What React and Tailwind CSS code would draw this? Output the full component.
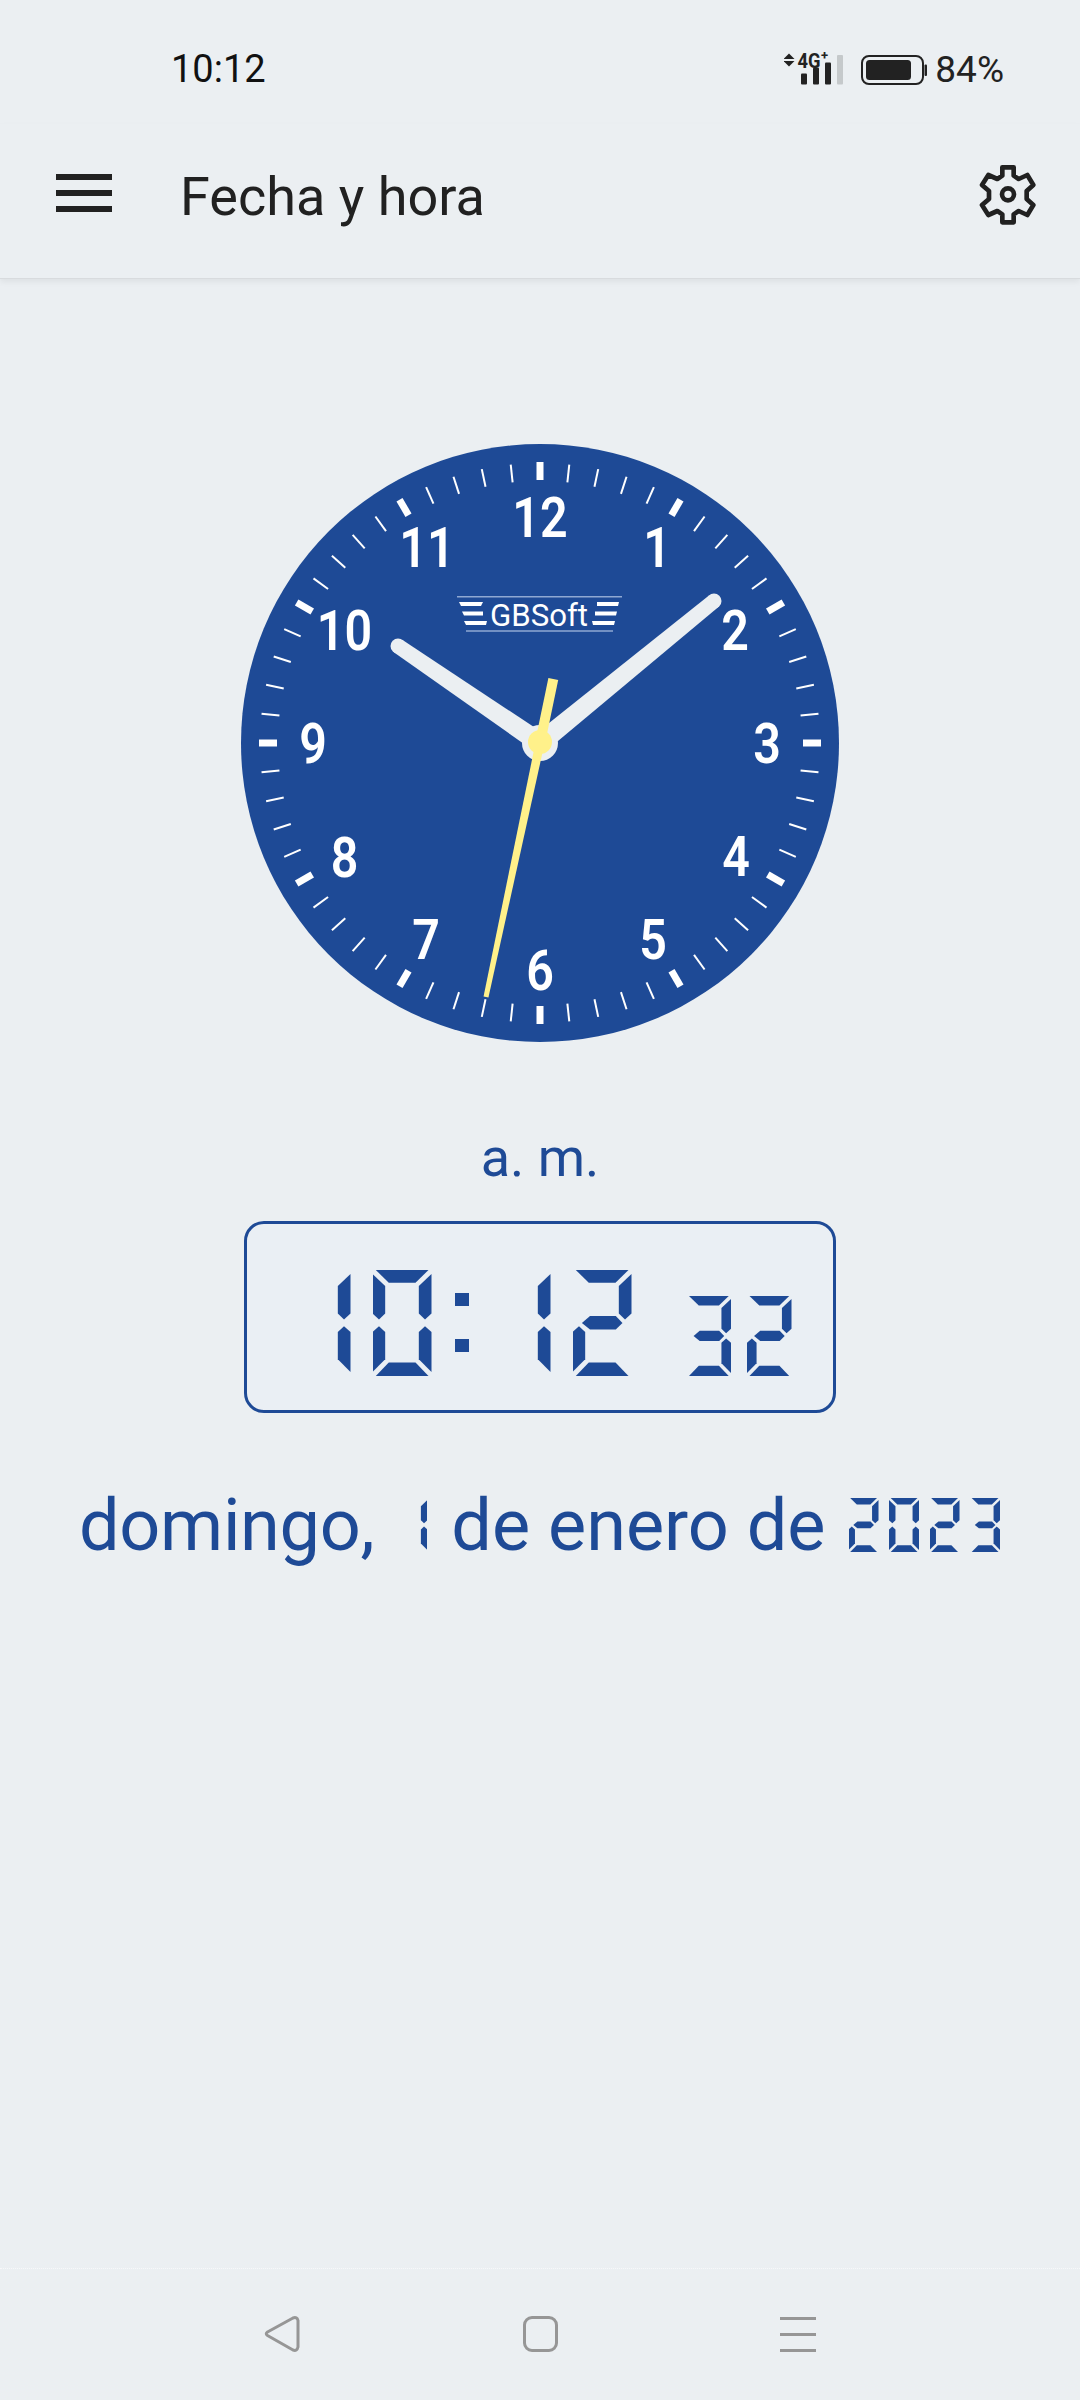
import React from "react";

const SEG = {
  a: "[clip-path:polygon(5.6%_0,94.9%_0,72.9%_12%,27.6%_12%)]",
  b: "[clip-path:polygon(100%_3.8%,78.5%_15.1%,78.5%_41%,89%_46.6%,100%_41%)]",
  c: "[clip-path:polygon(89%_53%,78.5%_58.4%,78.5%_84.2%,100%_96.2%,100%_58.4%)]",
  d: "[clip-path:polygon(5.6%_100%,94.9%_100%,72.9%_87.3%,27.6%_87.3%)]",
  e: "[clip-path:polygon(11%_53%,21.5%_58.4%,21.5%_84.2%,0_96.2%,0_58.4%)]",
  f: "[clip-path:polygon(0_3.8%,21.5%_15.1%,21.5%_41%,11%_46.6%,0_41%)]",
  g: "[clip-path:polygon(29.7%_43.5%,73.4%_43.5%,84.7%_49.9%,73.4%_56.2%,29.7%_56.2%,15.9%_49.9%)]",
};
const ON = { 0: "abcdef", 1: "bc", 2: "abged", 3: "abgcd" };

function Lcd({ value, className }) {
  return (
    <span className={`relative flex items-center justify-center shrink-0 leading-none text-transparent ${className}`}>
      {value}
      {ON[value].split("").map((s) => (
        <span key={s} className={`absolute inset-0 bg-[#1e4a96] ${SEG[s]}`} />
      ))}
    </span>
  );
}

function Hand({ x, y, w0, w1, fill, round }) {
  const dx = x - 300;
  const dy = y - 300;
  const len = Math.hypot(dx, dy);
  const nx = -dy / len;
  const ny = dx / len;
  const pts = [
    [300 + (nx * w0) / 2, 300 + (ny * w0) / 2],
    [x + (nx * w1) / 2, y + (ny * w1) / 2],
    [x - (nx * w1) / 2, y - (ny * w1) / 2],
    [300 - (nx * w0) / 2, 300 - (ny * w0) / 2],
  ]
    .map((p) => p.join(","))
    .join(" ");
  return (
    <g fill={fill}>
      <polygon points={pts} />
      {round && <circle cx={x} cy={y} r={w1 / 2} />}
    </g>
  );
}

function Clock() {
  const nums = [
    ["12", 300, 74], ["1", 417, 104], ["2", 495, 187], ["3", 527, 300], ["4", 496, 413], ["5", 413, 496],
    ["6", 300, 527], ["7", 186, 496], ["8", 104.5, 414], ["9", 73, 300], ["10", 104.5, 187], ["11", 187, 104],
  ];
  return (
    <svg viewBox="0 0 600 600" className="block w-[600px] h-[600px]">
      <circle cx="300" cy="300" r="299" fill="#1e4a96" />
      {Array.from({ length: 60 }, (_, i) => {
        const major = i % 5 === 0;
        return (
          <line
            key={i}
            x1="300"
            x2="300"
            y1={major ? 19 : 20}
            y2={major ? 37 : 38}
            stroke="#ffffff"
            strokeWidth={major ? 7 : 2}
            transform={`rotate(${i * 6} 300 300)`}
          />
        );
      })}
      {nums.map(([t, x, y]) => (
        <text
          key={t}
          transform={`translate(${x} ${y + 19.5}) scale(0.88 1)`}
          textAnchor="middle"
          fill="#ffffff"
          fontSize="55"
          fontWeight="600"
        >
          {t}
        </text>
      ))}
      <line x1="217" x2="382" y1="153.7" y2="153.7" stroke="#8fa8d2" strokeWidth="1.6" />
      <line x1="226" x2="373" y1="188" y2="188" stroke="#8fa8d2" strokeWidth="1.6" />
      <g fill="#ffffff">
        <polygon points="219,159 243,159 241,163 221,163" />
        <polygon points="222,168.500 243,168.500 243,172.500 224,172.500" />
        <polygon points="224,178 247,178 246,182 226,182" />
        <polygon points="357,159 379,159 378,163 357,163" />
        <polygon points="355,168.500 377,168.500 376,172.500 355,172.500" />
        <polygon points="352,178 375,178 374,182 353,182" />
      </g>
      <text x="299" y="182.5" textAnchor="middle" fill="#ffffff" fontSize="32" fontWeight="400" textLength="98" lengthAdjust="spacingAndGlyphs">
        GBSoft
      </text>
      <Hand x={158} y={203} w0={20} w1={15} fill="#ebeff2" round />
      <Hand x={474} y={158} w0={20} w1={15} fill="#ebeff2" round />
      <circle cx="300" cy="300" r="18" fill="#ebeff2" />
      <Hand x={246} y={554} w0={9} w1={5} fill="#fff18a" />
      <Hand x={313.3} y={236} w0={10} w1={10} fill="#fff18a" />
      <circle cx="300" cy="299" r="12" fill="#fff18a" />
    </svg>
  );
}

export default function App() {
  return (
    <div className="w-[1080px] h-[2400px] flex flex-col bg-[#ebeff2] [font-family:Roboto,sans-serif] overflow-hidden">
      {/* status bar */}
      <div className="h-[124px] pt-[14px] flex items-center justify-between pl-[171px] pr-[76px] text-[#222222]">
        <span className="text-[38px] leading-none text-[#111111]">10:12</span>
        <div className="flex items-center">
          <svg width="144" height="44" viewBox="785 46 144 44" className="block">
            <g fill="#222222">
              <polygon points="790,52.500 795.500,58 784.500,58" />
              <polygon points="790,65.500 795.500,60 784.500,60" />
              <text x="798.500" y="67" fontSize="20" fontWeight="700" textLength="23" lengthAdjust="spacingAndGlyphs">4G</text>
              <text x="822" y="59" fontSize="13" fontWeight="700">+</text>
              <rect x="802" y="72.500" width="6" height="11" rx="1" />
              <rect x="814" y="66.500" width="6" height="17" rx="1" />
              <rect x="826" y="61.500" width="6" height="22" rx="1" />
            </g>
            <rect x="838" y="54" width="6" height="29.500" rx="1" fill="#c5c9cb" />
            <rect x="863" y="55" width="61" height="28" rx="7" fill="none" stroke="#222222" strokeWidth="2" />
            <rect x="867" y="59" width="45" height="20" rx="3.500" fill="#222222" />
            <rect x="925.500" y="63.500" width="2.500" height="11.500" rx="1" fill="#222222" />
          </svg>
          <span className="ml-[7px] text-[37px] leading-none">84%</span>
        </div>
      </div>

      {/* app bar */}
      <div className="h-[155px] pb-[17px] flex items-center border-b border-[#d8dbde] shadow-[0_3px_6px_rgba(0,0,0,0.06)]">
        <div className="ml-[56px] w-[56px] flex flex-col gap-[10px]">
          <span className="block h-[6px] bg-[#212121]" />
          <span className="block h-[6px] bg-[#212121]" />
          <span className="block h-[6px] bg-[#212121]" />
        </div>
        <h1 className="ml-[68px] mt-[8px] text-[54px] leading-none font-normal text-[#212121]">Fecha y hora</h1>
        <svg width="80" height="80" viewBox="0 0 240 240" className="block ml-auto mr-[30px] mt-[4px]">
          <path
            d="M97 37 H131 V62 L146 72 L172 60 L190 90 L170 108 V132 L190 150 L172 180 L146 168 L131 178 V202 H97 V178 L82 168 L55 180 L36 150 L57 132 V108 L36 90 L55 60 L82 72 L97 62 Z"
            fill="none"
            stroke="#212121"
            strokeWidth="14"
            strokeLinejoin="round"
          />
          <circle cx="114" cy="118" r="18" fill="none" stroke="#212121" strokeWidth="14" />
        </svg>
      </div>

      {/* main */}
      <main className="flex-1 flex flex-col items-center pt-[164px] text-[#1e4a96]">
        <Clock />
        <div className="mt-[85px] text-[54px] leading-[60px]">a. m.</div>
        <div className="mt-[33px] w-[592px] h-[192px] rounded-[20px] border-[3px] border-[#1e4a96] bg-[#eaeff4] flex items-start pl-[44.500px] pt-[46px]">
          <Lcd value="1" className="w-[59px] h-[106px] text-[90px]" />
          <Lcd value="0" className="ml-[22px] w-[59px] h-[106px] text-[90px]" />
          <div className="ml-[23px] w-[14px] h-[106px] flex flex-col gap-[33px] pt-[23px]">
            <span className="block h-[13px] bg-[#1e4a96]" />
            <span className="block h-[13px] bg-[#1e4a96]" />
          </div>
          <Lcd value="1" className="ml-[23px] w-[59px] h-[106px] text-[90px]" />
          <Lcd value="2" className="ml-[22px] w-[59px] h-[106px] text-[90px]" />
          <Lcd value="3" className="ml-[55px] mt-[26px] w-[44.500px] h-[80px] text-[68px]" />
          <Lcd value="2" className="ml-[16px] mt-[26px] w-[44.500px] h-[80px] text-[68px]" />
        </div>
        <div className="mt-[70px] self-start pl-[79px] flex items-end text-[72px] leading-[86px] h-[86px]">
          <span className="tracking-[-0.3px]">domingo,</span>
          <Lcd value="1" className="ml-[23px] mb-[17px] w-[30px] h-[54px] text-[46px]" />
          <span className="ml-[24px]">de enero de</span>
          <Lcd value="2" className="ml-[23px] mb-[17px] w-[30px] h-[54px] text-[46px]" />
          <Lcd value="0" className="ml-[10.500px] mb-[17px] w-[30px] h-[54px] text-[46px]" />
          <Lcd value="2" className="ml-[10.500px] mb-[17px] w-[30px] h-[54px] text-[46px]" />
          <Lcd value="3" className="ml-[10.500px] mb-[17px] w-[30px] h-[54px] text-[46px]" />
        </div>
      </main>

      {/* navigation bar */}
      <nav className="h-[132px] pb-[48px] flex items-end pl-[264px] border-t border-dotted border-[#f7f9fa]">
        <svg width="36" height="36" viewBox="0 0 36 36" className="block">
          <path d="M3.500 16 L29 2 Q33 0.500 34 4.500 V31 Q33 35.500 29 34 L3.500 19.500 Q1 17.800 3.500 16 Z" fill="none" stroke="#969696" strokeWidth="3" strokeLinejoin="round" />
        </svg>
        <span className="block ml-[223px] w-[35px] h-[36px] rounded-[9px] border-[3px] border-[#969696]" />
        <div className="ml-[222px] w-[36px] flex flex-col gap-[13px]">
          <span className="block h-[3px] bg-[#969696]" />
          <span className="block h-[3px] bg-[#969696]" />
          <span className="block h-[3px] bg-[#969696]" />
        </div>
      </nav>
    </div>
  );
}
